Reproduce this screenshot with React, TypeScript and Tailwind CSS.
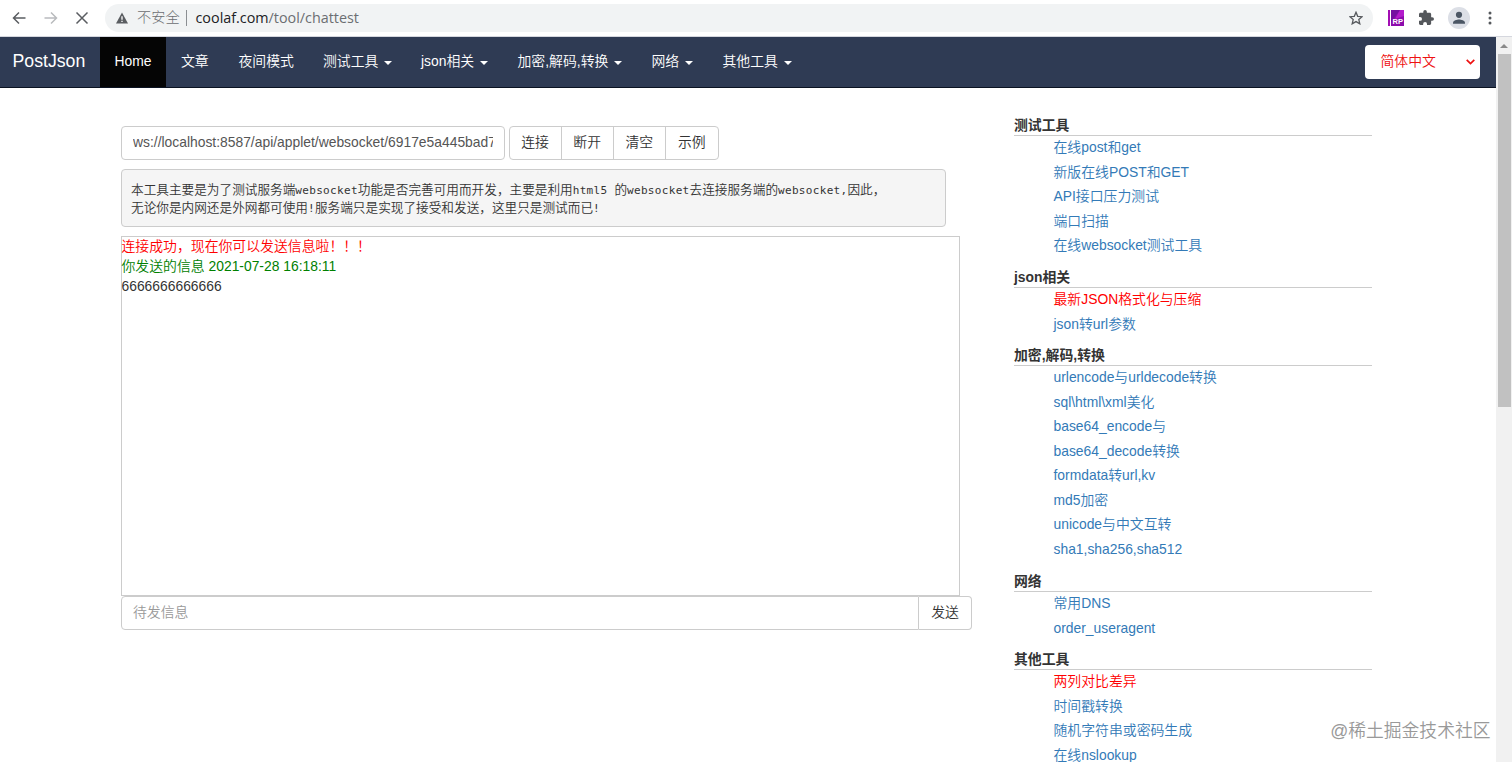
import React, { useState } from 'react';

interface NavItem {
  label: string;
  width: string;
  dropdown?: boolean;
}

interface ToolGroup {
  title: string;
  height: string;
  links: { label: string; hot?: boolean }[];
}

const navItems: NavItem[] = [
  { label: '文章', width: 'w-[57.5px]' },
  { label: '夜间模式', width: 'w-[84.5px]' },
  { label: '测试工具', width: 'w-[98px]', dropdown: true },
  { label: 'json相关', width: 'w-[96.5px]', dropdown: true },
  { label: '加密,解码,转换', width: 'w-[134px]', dropdown: true },
  { label: '网络', width: 'w-[71px]', dropdown: true },
  { label: '其他工具', width: 'w-[99px]', dropdown: true }
];

const groups: ToolGroup[] = [
  {
    title: '测试工具',
    height: 'h-[152px]',
    links: [
      { label: '在线post和get' },
      { label: '新版在线POST和GET' },
      { label: 'API接口压力测试' },
      { label: '端口扫描' },
      { label: '在线websocket测试工具' }
    ]
  },
  {
    title: 'json相关',
    height: 'h-[78px]',
    links: [{ label: '最新JSON格式化与压缩', hot: true }, { label: 'json转url参数' }]
  },
  {
    title: '加密,解码,转换',
    height: 'h-[226px]',
    links: [
      { label: 'urlencode与urldecode转换' },
      { label: 'sql\\html\\xml美化' },
      { label: 'base64_encode与' },
      { label: 'base64_decode转换' },
      { label: 'formdata转url,kv' },
      { label: 'md5加密' },
      { label: 'unicode与中文互转' },
      { label: 'sha1,sha256,sha512' }
    ]
  },
  {
    title: '网络',
    height: 'h-[78px]',
    links: [{ label: '常用DNS' }, { label: 'order_useragent' }]
  },
  {
    title: '其他工具',
    height: 'h-[130px]',
    links: [
      { label: '两列对比差异', hot: true },
      { label: '时间戳转换' },
      { label: '随机字符串或密码生成' },
      { label: '在线nslookup' }
    ]
  }
];

function BrowserBar() {
  return (
    <div className="flex h-[37px] shrink-0 items-start border-b border-[#d5d7de] bg-white pt-1">
      <div className="flex h-7 w-[105px] shrink-0 items-center">
        <svg className="ml-[11px] h-4 w-4" viewBox="0 0 16 16" fill="none" stroke="#5a5d61" strokeWidth="1.5">
          <path d="M14.5 8H2.5M8 2.5L2.5 8l5.5 5.5" />
        </svg>
        <svg className="ml-4 h-4 w-4" viewBox="0 0 16 16" fill="none" stroke="#b9bbbe" strokeWidth="1.5">
          <path d="M1.5 8h12M8 2.5l5.5 5.5L8 13.5" />
        </svg>
        <svg className="ml-[15px] h-4 w-4" viewBox="0 0 16 16" fill="none" stroke="#5a5d61" strokeWidth="1.5">
          <path d="M2.5 2.5l11 11M13.5 2.5l-11 11" />
        </svg>
      </div>
      <div className="flex h-7 w-[1268px] shrink-0 items-center rounded-full bg-[#f1f3f4] text-[14.2px] text-[#6b6e72]">
        <svg className="ml-[11px] h-3 w-3" viewBox="0 0 12 12">
          <path d="M6 0.4L12 11.6H0z" fill="#5a5d61" />
          <path d="M6 4.3v3.4M6 8.7v1.4" stroke="#fff" strokeWidth="1.3" />
        </svg>
        <span className="ml-[9px] w-[42px] whitespace-nowrap font-light">不安全</span>
        <span className="ml-[6.5px] h-4 w-px bg-[#8b8e92]" />
        <span className="ml-[9px] whitespace-nowrap font-['Open_Sans','Noto_Sans',sans-serif] text-[14.35px] font-normal">
          <span className="text-[#202124]">coolaf.com</span>/tool/chattest
        </span>
        <svg className="ml-auto mr-2.5 h-[14px] w-[14px]" viewBox="0 0 14 14" fill="none" stroke="#55585c" strokeWidth="1.3">
          <path d="M7 1.3l1.7 4 4.4.4-3.3 2.9 1 4.2L7 10.6l-3.8 2.2 1-4.2L.9 5.7l4.4-.4z" />
        </svg>
      </div>
      <div className="flex h-7 items-center">
        <svg className="ml-[14px] h-4 w-[18px]" viewBox="0 0 18 16">
          <path d="M1 0h2v16H1z" fill="#a30fb4" />
          <path d="M4 0h13v16H4z" fill="#8c0cac" />
          <path d="M4 0h9L4 12z" fill="#7410a0" />
          <path d="M13 0h4v6L8 9z" fill="#b31ccb" />
          <text x="5.6" y="14.3" fontSize="7.5" fontWeight="700" fontFamily="Liberation Sans" fill="#fff">RP</text>
        </svg>
        <svg className="mb-px ml-[14px] h-[15px] w-[15px]" viewBox="2 1 21 21" fill="#54575b">
          <path d="M20.5 11H19V7c0-1.1-.9-2-2-2h-4V3.5a2.5 2.5 0 0 0-5 0V5H4c-1.1 0-2 .9-2 2v3.8h1.5a2.7 2.7 0 0 1 0 5.4H2V20c0 1.1.9 2 2 2h3.8v-1.5a2.7 2.7 0 0 1 5.4 0V22H17c1.1 0 2-.9 2-2v-4h1.5a2.5 2.5 0 0 0 0-5z" />
        </svg>
        <svg className="ml-[14px] h-[22px] w-[22px]" viewBox="0 0 22 22">
          <circle cx="11" cy="11" r="11" fill="#dcdfe6" />
          <circle cx="11" cy="7.8" r="3.1" fill="#4b5664" />
          <path d="M5 16.8v-1.3c0-2 4-3.1 6-3.1s6 1.1 6 3.1v1.3z" fill="#4b5664" />
        </svg>
        <svg className="ml-[18px] h-[14px] w-1" viewBox="0 0 4 14" fill="#55585c">
          <circle cx="2" cy="2" r="1.5" />
          <circle cx="2" cy="7" r="1.5" />
          <circle cx="2" cy="12" r="1.5" />
        </svg>
      </div>
    </div>
  );
}

function Navbar() {
  return (
    <nav className="flex h-[51px] shrink-0 border-b border-[#0b1322] bg-[#2f3b54] text-white">
      <div className="flex w-[100px] items-center pl-[12.5px] text-[17.7px]">PostJson</div>
      <div className="flex w-[66px] items-center justify-center bg-[#050505]">Home</div>
      {navItems.map((item) => (
        <div key={item.label} className={`flex shrink-0 items-center whitespace-nowrap pl-[15px] ${item.width}`}>
          {item.label}
          {item.dropdown && (
            <svg className="ml-1.5 mt-px h-1 w-2" viewBox="0 0 8 4" fill="#fff">
              <path d="M0 0h8L4 4z" />
            </svg>
          )}
        </div>
      ))}
      <div className="ml-auto mr-4 mt-2 flex h-[34px] w-[115.5px] items-center justify-between rounded-[4px] bg-white pl-4 pr-[5px] text-[#ee1111]">
        <span>简体中文</span>
        <svg className="h-[6px] w-[9px]" viewBox="0 0 9 6" fill="none" stroke="currentColor" strokeWidth="1.7">
          <path d="M.7.8l3.8 3.8L8.3.8" />
        </svg>
      </div>
    </nav>
  );
}

function Mono({ children }: { children: React.ReactNode }) {
  return <span className="font-['DejaVu_Sans_Mono',monospace] text-[11px] leading-none tracking-[0.32px]">{children}</span>;
}

export default function App() {
  const [url, setUrl] = useState('ws://localhost:8587/api/applet/websocket/6917e5a445bad7');
  const [message, setMessage] = useState('');

  return (
    <div className="flex h-[762px] w-[1512px] flex-col overflow-hidden bg-white font-['Liberation_Sans','Noto_Sans_CJK_SC',sans-serif] text-[13.87px] font-[350] leading-[19.6px] text-[#333]">
      <BrowserBar />
      <div className="flex min-h-0 flex-1">
        <div className="relative flex w-[1496px] shrink-0 flex-col">
          <Navbar />
          <div className="flex min-h-0 flex-1">
            <main className="ml-[120.5px] w-[852px] shrink-0 pt-[38px]">
              <div className="flex items-start">
                <input
                  value={url}
                  onChange={(e) => setUrl(e.target.value)}
                  className="h-[33.5px] w-[384.5px] rounded-[4px] border border-[#ccc] pb-0.5 pl-[11.5px] pr-[11px] text-[#555] outline-none"
                />
                <div className="ml-[3.5px] flex h-[34px] divide-x divide-[#ccc] rounded-[4px] border border-[#ccc]">
                  {['连接', '断开', '清空', '示例'].map((label) => (
                    <button key={label} type="button" className="w-[52.1px]">
                      {label}
                    </button>
                  ))}
                </div>
              </div>
              <pre className="mt-[9px] h-[58px] w-[825.5px] rounded-[4px] border border-[#ccc] bg-[#f5f5f5] pl-[9.5px] pt-[10px] font-['Noto_Sans_CJK_SC',sans-serif] text-[12.65px] leading-[18.3px]">
                本工具主要是为了测试服务端<Mono>websocket</Mono>功能是否完善可用而开发，主要是利用<Mono>html5 </Mono>的<Mono>websocket</Mono>去连接服务端的<Mono>websocket,</Mono>因此，
                {'\n'}无论你是内网还是外网都可使用<Mono>!</Mono>服务端只是实现了接受和发送，这里只是测试而已<Mono>!</Mono>
              </pre>
              <div className="mt-[9px] h-[360px] w-[839.5px] border border-[#ccc]">
                <p className="text-[#ff0000]">连接成功，现在你可以发送信息啦！！！</p>
                <p className="text-[#008000]">你发送的信息 2021-07-28 16:18:11</p>
                <p className="pt-px">6666666666666</p>
              </div>
              <div className="flex h-[34px]">
                <input
                  value={message}
                  onChange={(e) => setMessage(e.target.value)}
                  placeholder="待发信息"
                  className="w-[798.5px] rounded-l-[4px] border border-[#ccc] px-[11.5px] outline-none placeholder:text-[#999]"
                />
                <button type="button" className="w-[53px] rounded-r-[4px] border border-l-0 border-[#ccc]">
                  发送
                </button>
              </div>
            </main>
            <aside className="ml-[41.5px] w-[358px] pt-[28px]">
              {groups.map((group) => (
                <section key={group.title} className={group.height}>
                  <h4 className="h-5 border-b border-[#ccc] font-bold">{group.title}</h4>
                  <ul className="pl-[39.5px]">
                    {group.links.map((link) => (
                      <li key={link.label} className="h-[24.5px] leading-[22.4px]">
                        <a className={link.hot ? 'text-[#ff0000]' : 'text-[#337ab7]'}>{link.label}</a>
                      </li>
                    ))}
                  </ul>
                </section>
              ))}
            </aside>
          </div>
          <div className="absolute bottom-[19px] right-[5.5px] whitespace-nowrap text-[17.8px] leading-6 text-[#999] [text-shadow:0_0_2px_#fff]">
            @稀土掘金技术社区
          </div>
        </div>
        <div className="flex w-4 flex-col items-center bg-[#f1f1f1]">
          <svg className="mt-[7px] h-1 w-2" viewBox="0 0 8 4" fill="#8a8a8a">
            <path d="M0 4h8L4 0z" />
          </svg>
          <div className="mt-1.5 h-[353px] w-[13px] bg-[#c1c1c1]" />
        </div>
      </div>
    </div>
  );
}
